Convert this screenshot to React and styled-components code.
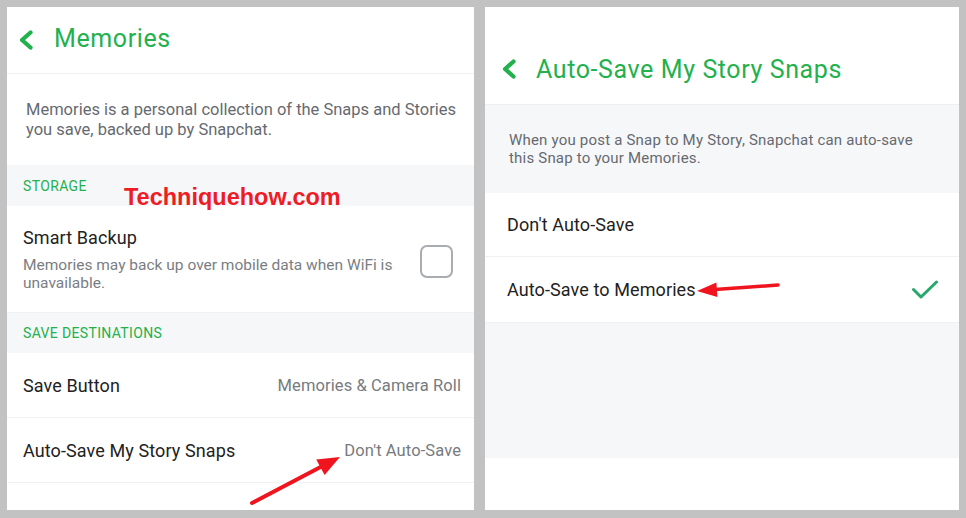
import React from 'react';
import styled, { createGlobalStyle } from 'styled-components';

const GREEN = '#22b14c';
const SOFT = '#f6f7f9';

const GlobalStyle = createGlobalStyle`
  html, body {
    margin: 0;
    padding: 0;
    background: #c2c2c2;
  }
  body {
    font-family: Roboto, "Noto Sans", sans-serif;
    -webkit-font-smoothing: antialiased;
  }
`;

const Page = styled.div`
  display: flex;
  gap: 11px;
  padding: 7px 7px 8px;
  height: 518px;
  box-sizing: border-box;
  background: #c2c2c2;
`;

const Panel = styled.div`
  position: relative;
  width: ${p => p.width}px;
  background: #ffffff;
  display: flex;
  flex-direction: column;
  overflow: hidden;
`;

const Header = styled.div`
  height: ${p => p.height}px;
  flex-shrink: 0;
  display: flex;
  align-items: center;
  padding-left: ${p => p.inset}px;
  padding-top: ${p => p.shift}px;
  box-sizing: border-box;
  border-bottom: 1px solid #eeeff1;
`;

const Back = styled.svg`
  width: 17px;
  height: 20px;
  margin-right: ${p => p.gap}px;
  flex-shrink: 0;
`;

const Title = styled.h1`
  margin: ${p => (p.lift ? `-${p.lift}px 0 0` : 0)};
  font-size: 25px;
  font-weight: 400;
  color: ${GREEN};
  letter-spacing: 0.6px;
`;

const Intro = styled.p`
  margin: 0;
  height: ${p => p.height}px;
  box-sizing: border-box;
  padding: ${p => p.pad};
  background: ${p => (p.tinted ? SOFT : '#fff')};
  color: #666a70;
  font-size: ${p => p.size}px;
  line-height: ${p => p.lh}px;
  letter-spacing: ${p => p.track}px;
  flex-shrink: 0;
`;

const SectionLabel = styled.div`
  height: ${p => p.height}px;
  flex-shrink: 0;
  background: ${SOFT};
  color: ${GREEN};
  font-size: 14px;
  display: flex;
  align-items: center;
  padding-left: 16px;
  letter-spacing: 0.35px;
`;

const Row = styled.div`
  height: ${p => p.height}px;
  flex-shrink: 0;
  box-sizing: border-box;
  display: flex;
  align-items: center;
  justify-content: space-between;
  padding: 0 ${p => p.right}px 0 ${p => p.left}px;
  border-bottom: 1px solid #f0f1f3;
`;

const RowTitle = styled.span`
  font-size: 18px;
  color: #222;
  letter-spacing: 0.1px;
`;

const RowValue = styled.span`
  font-size: 16.5px;
  color: #777b80;
  letter-spacing: 0.1px;
`;

const Stack = styled.div`
  display: flex;
  flex-direction: column;
  gap: 8px;
`;

const RowNote = styled.span`
  font-size: 15.5px;
  line-height: 18px;
  color: #7a7e83;
  width: 385px;
`;

const Checkbox = styled.span`
  width: 33px;
  height: 33px;
  box-sizing: border-box;
  border: 2px solid #a9acb0;
  border-radius: 7px;
  flex-shrink: 0;
  margin-top: 4px;
`;

const Filler = styled.div`
  height: ${p => p.height}px;
  flex-shrink: 0;
  background: ${SOFT};
`;

const Rest = styled.div`
  flex: 1;
  background: #fff;
`;

const Watermark = styled.span`
  position: absolute;
  left: 117px;
  top: 177px;
  font-family: "Liberation Sans", Arial, sans-serif;
  font-weight: 700;
  font-size: 23.5px;
  color: #ee1c25;
`;

const Pointer = styled.svg`
  position: absolute;
  left: ${p => p.x}px;
  top: ${p => p.y}px;
  overflow: visible;
  pointer-events: none;
`;

const Chevron = ({ gap }) => (
  <Back gap={gap} viewBox="0 0 17 20">
    <path d="M12.5 2.5 L4 10 L12.5 17.5" fill="none" stroke={GREEN} strokeWidth="4.2" strokeLinecap="round" strokeLinejoin="round" />
  </Back>
);

const Tick = () => (
  <svg width="28" height="20" viewBox="0 0 28 20">
    <path d="M2.5 9.5 L10 17 L25.5 2" fill="none" stroke="#27a96c" strokeWidth="3" strokeLinecap="round" strokeLinejoin="round" />
  </svg>
);

export default function App() {
  return (
    <>
      <GlobalStyle />
      <Page>
        <Panel width={467}>
          <Header height={67} inset={11} shift={0}>
            <Chevron gap={19} />
            <Title lift={4}>Memories</Title>
          </Header>
          <Intro height={91} pad="26px 2px 0 19px" size={16.5} lh={20} track={0}>
            Memories is a personal collection of the Snaps and Stories you save, backed up by Snapchat.
          </Intro>
          <SectionLabel height={41}>STORAGE</SectionLabel>
          <Row height={107} left={16} right={21}>
            <Stack>
              <RowTitle>Smart Backup</RowTitle>
              <RowNote>Memories may back up over mobile data when WiFi is unavailable.</RowNote>
            </Stack>
            <Checkbox />
          </Row>
          <SectionLabel height={40}>SAVE DESTINATIONS</SectionLabel>
          <Row height={65} left={16} right={13}>
            <RowTitle>Save Button</RowTitle>
            <RowValue>Memories &amp; Camera Roll</RowValue>
          </Row>
          <Row height={65} left={16} right={13}>
            <RowTitle>Auto-Save My Story Snaps</RowTitle>
            <RowValue>Don't Auto-Save</RowValue>
          </Row>
          <Rest />
          <Watermark>Techniquehow.com</Watermark>
          <Pointer x={235} y={440} width="110" height="70">
            <line x1="10" y1="56" x2="80" y2="19.3" stroke="#f0141e" strokeWidth="4" strokeLinecap="round" />
            <polygon points="98,10 82.6,28 74.2,12.4" fill="#f0141e" />
          </Pointer>
        </Panel>

        <Panel width={474}>
          <Header height={98} inset={16} shift={27}>
            <Chevron gap={18} />
            <Title>Auto-Save My Story Snaps</Title>
          </Header>
          <Intro height={88} tinted pad="26px 40px 0 24px" size={15} lh={18} track={0.2}>
            When you post a Snap to My Story, Snapchat can auto-save this Snap to your Memories.
          </Intro>
          <Row height={64} left={22} right={21}>
            <RowTitle>Don't Auto-Save</RowTitle>
          </Row>
          <Row height={66} left={22} right={20}>
            <RowTitle>Auto-Save to Memories</RowTitle>
            <Tick />
          </Row>
          <Filler height={135} />
          <Rest />
          <Pointer x={205} y={270} width="100" height="24">
            <line x1="88" y1="8" x2="25" y2="12.6" stroke="#f0141e" strokeWidth="3.5" strokeLinecap="round" />
            <polygon points="7,14 27.4,20 26.4,5.5" fill="#f0141e" />
          </Pointer>
        </Panel>
      </Page>
    </>
  );
}
